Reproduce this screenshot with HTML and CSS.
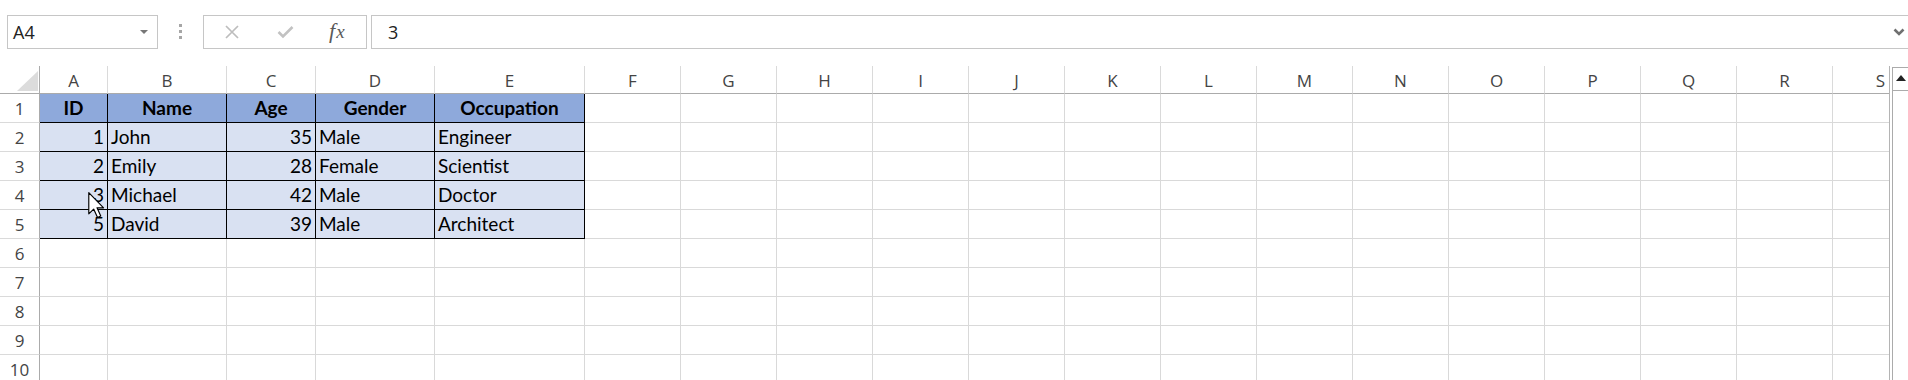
FILE: index.html
```html
<!DOCTYPE html>
<html>
<head>
<meta charset="utf-8">
<title>Sheet</title>
<link rel="stylesheet" href="styles.css">
</head>
<body>
<div class="topbar">
  <div class="namebox"><span>A4</span><span class="dd"></span></div>
  <div class="grip"><span></span><span></span><span></span></div>
  <div class="fxbox">
    <svg class="ico-x" width="14" height="14" viewBox="0 0 14 14"><path d="M1 1 L13 13 M13 1 L1 13" stroke="#bdbdbd" stroke-width="1.7" fill="none"/></svg>
    <svg class="ico-ok" width="17" height="14" viewBox="0 0 17 14"><path d="M1.5 7 L6 11.5 L15.5 2" stroke="#c2c2c2" stroke-width="2.6" fill="none"/></svg>
    <span class="fx">f<span class="fxx">x</span></span>
  </div>
  <div class="formula"><span>3</span>
    <svg class="chev" width="12" height="8" viewBox="0 0 12 8"><path d="M1.5 1.5 L6 6 L10.5 1.5" stroke="#707070" stroke-width="2.6" fill="none"/></svg>
  </div>
</div>
<div class="sheet">
  <div class="viewport">
    <div class="grid">
      <div class="corner"><svg width="21" height="20" viewBox="0 0 21 20"><polygon points="21,0 21,20 0,20" fill="#dcdcdc"/></svg></div>
      <div class="ch">A</div><div class="ch">B</div><div class="ch">C</div><div class="ch">D</div><div class="ch">E</div><div class="ch">F</div><div class="ch">G</div><div class="ch">H</div><div class="ch">I</div><div class="ch">J</div><div class="ch">K</div><div class="ch">L</div><div class="ch">M</div><div class="ch">N</div><div class="ch">O</div><div class="ch">P</div><div class="ch">Q</div><div class="ch">R</div><div class="ch">S</div>

      <div class="rh">1</div>
      <div class="c t th">ID</div><div class="c t th">Name</div><div class="c t th">Age</div><div class="c t th">Gender</div><div class="c t th">Occupation</div>
      <div class="c"></div><div class="c"></div><div class="c"></div><div class="c"></div><div class="c"></div><div class="c"></div><div class="c"></div><div class="c"></div><div class="c"></div><div class="c"></div><div class="c"></div><div class="c"></div><div class="c"></div><div class="c"></div>

      <div class="rh">2</div>
      <div class="c t n">1</div><div class="c t">John</div><div class="c t n">35</div><div class="c t">Male</div><div class="c t">Engineer</div>
      <div class="c"></div><div class="c"></div><div class="c"></div><div class="c"></div><div class="c"></div><div class="c"></div><div class="c"></div><div class="c"></div><div class="c"></div><div class="c"></div><div class="c"></div><div class="c"></div><div class="c"></div><div class="c"></div>

      <div class="rh">3</div>
      <div class="c t n">2</div><div class="c t">Emily</div><div class="c t n">28</div><div class="c t">Female</div><div class="c t">Scientist</div>
      <div class="c"></div><div class="c"></div><div class="c"></div><div class="c"></div><div class="c"></div><div class="c"></div><div class="c"></div><div class="c"></div><div class="c"></div><div class="c"></div><div class="c"></div><div class="c"></div><div class="c"></div><div class="c"></div>

      <div class="rh">4</div>
      <div class="c t n">3</div><div class="c t">Michael</div><div class="c t n">42</div><div class="c t">Male</div><div class="c t">Doctor</div>
      <div class="c"></div><div class="c"></div><div class="c"></div><div class="c"></div><div class="c"></div><div class="c"></div><div class="c"></div><div class="c"></div><div class="c"></div><div class="c"></div><div class="c"></div><div class="c"></div><div class="c"></div><div class="c"></div>

      <div class="rh">5</div>
      <div class="c t n">5</div><div class="c t">David</div><div class="c t n">39</div><div class="c t">Male</div><div class="c t">Architect</div>
      <div class="c"></div><div class="c"></div><div class="c"></div><div class="c"></div><div class="c"></div><div class="c"></div><div class="c"></div><div class="c"></div><div class="c"></div><div class="c"></div><div class="c"></div><div class="c"></div><div class="c"></div><div class="c"></div>

      <div class="rh">6</div>
      <div class="c"></div><div class="c"></div><div class="c"></div><div class="c"></div><div class="c"></div><div class="c"></div><div class="c"></div><div class="c"></div><div class="c"></div><div class="c"></div><div class="c"></div><div class="c"></div><div class="c"></div><div class="c"></div><div class="c"></div><div class="c"></div><div class="c"></div><div class="c"></div><div class="c"></div>

      <div class="rh">7</div>
      <div class="c"></div><div class="c"></div><div class="c"></div><div class="c"></div><div class="c"></div><div class="c"></div><div class="c"></div><div class="c"></div><div class="c"></div><div class="c"></div><div class="c"></div><div class="c"></div><div class="c"></div><div class="c"></div><div class="c"></div><div class="c"></div><div class="c"></div><div class="c"></div><div class="c"></div>

      <div class="rh">8</div>
      <div class="c"></div><div class="c"></div><div class="c"></div><div class="c"></div><div class="c"></div><div class="c"></div><div class="c"></div><div class="c"></div><div class="c"></div><div class="c"></div><div class="c"></div><div class="c"></div><div class="c"></div><div class="c"></div><div class="c"></div><div class="c"></div><div class="c"></div><div class="c"></div><div class="c"></div>

      <div class="rh">9</div>
      <div class="c"></div><div class="c"></div><div class="c"></div><div class="c"></div><div class="c"></div><div class="c"></div><div class="c"></div><div class="c"></div><div class="c"></div><div class="c"></div><div class="c"></div><div class="c"></div><div class="c"></div><div class="c"></div><div class="c"></div><div class="c"></div><div class="c"></div><div class="c"></div><div class="c"></div>

      <div class="rh">10</div>
      <div class="c"></div><div class="c"></div><div class="c"></div><div class="c"></div><div class="c"></div><div class="c"></div><div class="c"></div><div class="c"></div><div class="c"></div><div class="c"></div><div class="c"></div><div class="c"></div><div class="c"></div><div class="c"></div><div class="c"></div><div class="c"></div><div class="c"></div><div class="c"></div><div class="c"></div>
    </div>
  </div>
  <div class="vscroll"><div class="up"><span class="tri"></span></div></div>
</div>
<svg class="cursor" width="17" height="27" viewBox="0 0 13 21"><path d="M0.5 0.5 L0.5 17 L4.3 13.3 L7.3 19.8 L9.8 18.7 L6.9 12.3 L12 12.3 Z" fill="#fff" stroke="#000" stroke-width="0.9" stroke-linejoin="round"/></svg>
</body>
</html>
```

FILE: styles.css
```css
* { box-sizing: border-box; }
html, body { margin: 0; padding: 0; }
body {
  width: 1908px;
  height: 380px;
  overflow: hidden;
  background: #fff;
  font-family: "Open Sans", "Noto Sans", sans-serif;
  position: relative;
}

/* ---------- formula bar ---------- */
.topbar {
  height: 66px;
  display: flex;
  align-items: flex-start;
  padding-top: 15px;
  overflow: hidden;
}
.namebox {
  margin-left: 7px;
  width: 151px;
  height: 34px;
  border: 1px solid #c6c6c6;
  display: flex;
  align-items: center;
  justify-content: space-between;
  padding: 0 9px 0 5px;
  font-size: 18px;
  color: #222;
}
.dd {
  width: 0;
  height: 0;
  border-left: 4px solid transparent;
  border-right: 4px solid transparent;
  border-top: 4px solid #777;
}
.grip {
  margin-left: 21px;
  margin-top: 9px;
  display: flex;
  flex-direction: column;
  gap: 3px;
}
.grip span {
  display: block;
  width: 3px;
  height: 3px;
  background: #a6a6a6;
}
.fxbox {
  margin-left: 21px;
  width: 164px;
  height: 34px;
  border: 1px solid #c6c6c6;
  display: flex;
  align-items: center;
  padding-left: 21px;
}
.ico-ok { margin-left: 38px; }
.fx {
  margin-left: 35px;
  font-family: "Liberation Serif", "DejaVu Serif", serif;
  font-style: italic;
  font-size: 22px;
  color: #5a5a5a;
  line-height: 1;
  margin-top: -2px;
}
.fxx { font-size: 19px; margin-left: 1px; }
.formula {
  margin-left: 4px;
  flex: 1;
  margin-right: -4px;
  height: 34px;
  border: 1px solid #c6c6c6;
  display: flex;
  align-items: center;
  justify-content: space-between;
  padding: 0 6px 0 16px;
  font-size: 18px;
  color: #222;
}

/* ---------- sheet ---------- */
.sheet {
  display: flex;
  height: 314px;
}
.viewport {
  width: 1890px;
  height: 314px;
  overflow: hidden;
  border-right: 1px solid #b4b4b4;
}
.grid {
  display: grid;
  grid-template-columns: 40px 68px 119px 89px 119px 150px repeat(14, 96px);
  grid-template-rows: 28px repeat(10, 29px);
  width: max-content;
}
.corner {
  border-right: 1px solid #ababab;
  border-bottom: 1px solid #ababab;
  display: flex;
  justify-content: flex-end;
  align-items: flex-end;
  padding: 0 1px 2px 0;
}
.ch {
  border-right: 1px solid #dadada;
  border-bottom: 1px solid #ababab;
  text-align: center;
  font-size: 17px;
  color: #444;
  padding-top: 3px;
  line-height: 24px;
}
.rh {
  border-right: 1px solid #ababab;
  border-bottom: 1px solid #dadada;
  text-align: center;
  font-size: 17px;
  color: #444;
  padding-top: 3px;
  line-height: 24px;
}
.c {
  border-right: 1px solid #d9d9d9;
  border-bottom: 1px solid #d9d9d9;
  font-family: Lato, "Liberation Sans", sans-serif;
  font-size: 19px;
  line-height: 28px;
  color: #000;
  padding: 0 3px;
  white-space: nowrap;
  overflow: hidden;
}
.t {
  background: #d9e1f2;
  border-right-color: #000;
  border-bottom-color: #000;
}
.th {
  background: #8ea9db;
  font-weight: 700;
  text-align: center;
}
.n { text-align: right; }

/* ---------- scrollbar ---------- */
.vscroll {
  margin-left: 2px;
  margin-top: 1px;
  width: 16px;
  border-left: 1px solid #ababab;
  border-top: 1px solid #ababab;
  background: #fff;
}
.up {
  height: 23px;
  border-bottom: 1px solid #ababab;
  display: flex;
  justify-content: center;
  align-items: center;
}
.tri {
  width: 0;
  height: 0;
  border-left: 5px solid transparent;
  border-right: 5px solid transparent;
  border-bottom: 6px solid #222;
  margin-top: -2px;
}

/* ---------- mouse pointer overlay ---------- */
.cursor {
  position: absolute;
  left: 88px;
  top: 192px;
}
```
